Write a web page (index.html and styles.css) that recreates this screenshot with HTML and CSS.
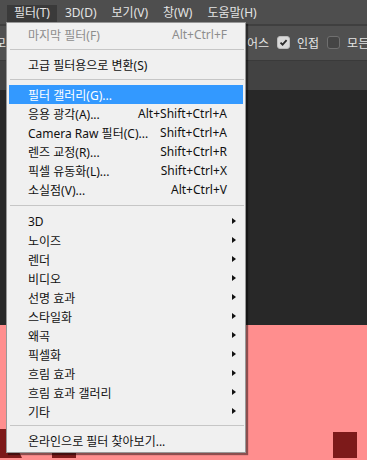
FILE: index.html
```html
<!DOCTYPE html>
<html lang="ko">
<head>
  <meta charset="UTF-8">
  <title>필터 메뉴</title>
  <link rel="stylesheet" href="styles.css">
</head>
<body>
  <div id="app">
    <div class="menubar">
      <span class="menubar-item open">필터(T)</span>
      <span class="menubar-item">3D(D)</span>
      <span class="menubar-item">보기(V)</span>
      <span class="menubar-item">창(W)</span>
      <span class="menubar-item">도움말(H)</span>
    </div>

    <div class="options">
      <span class="opt-mode">모드</span>
      <span class="opt-aa">앨리어스</span>
      <span class="check checked">
        <svg width="11" height="11" viewBox="0 0 11 11"><path d="M2.5 5.6 L4.6 7.7 L8.6 3.2" fill="none" stroke="#2b2b2b" stroke-width="1.8"/></svg>
      </span>
      <span class="opt-label">인접</span>
      <span class="check"></span>
      <span class="opt-label">모든 레이어 샘플링</span>
    </div>

    <div class="tabbar"></div>

    <div class="workspace"></div>

    <div class="artboard">
      <svg class="art" width="367" height="133" viewBox="0 0 367 133">
        <rect x="0" y="0" width="367" height="133" fill="#ff8e8e"/>
        <path d="M0 104 L8 104 L22 133 L0 133 Z" fill="#7d1a1a"/>
        <rect x="52" y="124" width="24" height="9" fill="#7d1a1a"/>
        <rect x="333" y="107" width="24" height="26" fill="#7d1a1a"/>
      </svg>
    </div>

    <div class="menu">
      <div class="item disabled"><span class="label">마지막 필터(F)</span><span class="shortcut">Alt+Ctrl+F</span><span class="sub"></span></div>
      <div class="sep"></div>
      <div class="item"><span class="label">고급 필터용으로 변환(S)</span><span class="sub"></span></div>
      <div class="sep"></div>
      <div class="item active"><span class="label">필터 갤러리(G)...</span><span class="sub"></span></div>
      <div class="item"><span class="label">응용 광각(A)...</span><span class="shortcut">Alt+Shift+Ctrl+A</span><span class="sub"></span></div>
      <div class="item"><span class="label">Camera Raw 필터(C)...</span><span class="shortcut">Shift+Ctrl+A</span><span class="sub"></span></div>
      <div class="item"><span class="label">렌즈 교정(R)...</span><span class="shortcut">Shift+Ctrl+R</span><span class="sub"></span></div>
      <div class="item"><span class="label">픽셀 유동화(L)...</span><span class="shortcut">Shift+Ctrl+X</span><span class="sub"></span></div>
      <div class="item"><span class="label">소실점(V)...</span><span class="shortcut">Alt+Ctrl+V</span><span class="sub"></span></div>
      <div class="sep wide"></div>
      <div class="item"><span class="label">3D</span><span class="sub arrow"></span></div>
      <div class="item"><span class="label">노이즈</span><span class="sub arrow"></span></div>
      <div class="item"><span class="label">렌더</span><span class="sub arrow"></span></div>
      <div class="item"><span class="label">비디오</span><span class="sub arrow"></span></div>
      <div class="item"><span class="label">선명 효과</span><span class="sub arrow"></span></div>
      <div class="item"><span class="label">스타일화</span><span class="sub arrow"></span></div>
      <div class="item"><span class="label">왜곡</span><span class="sub arrow"></span></div>
      <div class="item"><span class="label">픽셀화</span><span class="sub arrow"></span></div>
      <div class="item"><span class="label">흐림 효과</span><span class="sub arrow"></span></div>
      <div class="item"><span class="label">흐림 효과 갤러리</span><span class="sub arrow"></span></div>
      <div class="item"><span class="label">기타</span><span class="sub arrow"></span></div>
      <div class="sep narrow"></div>
      <div class="item"><span class="label">온라인으로 필터 찾아보기...</span><span class="sub"></span></div>
    </div>
  </div>
</body>
</html>
```

FILE: styles.css
```css
html, body {
  margin: 0;
  padding: 0;
}

body {
  background-color: #282828;
  font-family: "Noto Sans", "Noto Sans CJK KR", sans-serif;
  font-size: 12px;
  overflow: hidden;
}

#app {
  position: relative;
  width: 367px;
  height: 460px;
  display: flex;
  flex-direction: column;
  overflow: hidden;
}

/* top menu bar */
.menubar {
  height: 26px;
  background-color: #4e4e4e;
  border-bottom: 2px solid #3f3f3f;
  display: flex;
  align-items: flex-start;
  padding: 5px 0 0 7px;
  box-sizing: border-box;
  flex-shrink: 0;
}

.menubar-item {
  color: #e4e4e4;
  height: 17px;
  line-height: 16px;
  padding: 0 7px;
  margin-right: 1px;
}

.menubar-item.open {
  background-color: #3a3a3a;
}

/* options bar */
.options {
  height: 34px;
  background-color: #505050;
  display: flex;
  align-items: center;
  white-space: nowrap;
  color: #e4e4e4;
  padding-bottom: 1px;
  box-sizing: border-box;
  flex-shrink: 0;
}

.options > span {
  flex-shrink: 0;
}

.opt-mode {
  margin-left: -5px;
  width: 224px;
}

.opt-aa {
  width: 50px;
  text-align: right;
}

.check {
  width: 11px;
  height: 11px;
  margin-left: 8px;
  border: 1px solid #6f6f6f;
  border-radius: 3px;
  background-color: #454545;
  display: flex;
}

.check.checked {
  background-color: #d9d9d9;
  border-color: #bdbdbd;
}

.opt-label {
  margin-left: 7px;
}

.tabbar {
  height: 30px;
  background-color: #424242;
  border-top: 1px solid #3a3a3a;
  box-sizing: border-box;
  flex-shrink: 0;
}

.workspace {
  height: 235px;
  background-color: #282828;
  flex-shrink: 0;
}

.artboard {
  flex: 1;
  background-color: #ff8e8e;
}

.art {
  display: block;
}

/* dropdown */
.menu {
  position: absolute;
  left: 6px;
  top: 22px;
  width: 240px;
  box-sizing: border-box;
  background-color: #f0f0f0;
  border: 1px solid #989898;
  padding: 2px 1px;
  box-shadow: 2px 2px 1px rgba(0, 0, 0, 0.45);
}

.item {
  height: 19px;
  display: flex;
  align-items: center;
  padding-left: 19px;
  margin: 0 1px;
  color: #111;
  white-space: nowrap;
}

.item .label {
  flex: 1;
}

.item .shortcut {
  text-align: right;
}

.item .sub {
  width: 16px;
  height: 19px;
  flex-shrink: 0;
  position: relative;
}

.item .arrow::after {
  content: "";
  position: absolute;
  left: 5px;
  top: 6px;
  border-left: 4px solid #111;
  border-top: 3.5px solid transparent;
  border-bottom: 3.5px solid transparent;
}

.item.disabled {
  color: #8d8d8d;
}

.item.active {
  background-color: #3399ff;
  color: #fff;
}

.sep {
  height: 1px;
  background-color: #c6c6c6;
  margin: 5px 0 5px 2px;
}

.sep.wide {
  margin: 6px 0 6px 2px;
}

.sep.narrow {
  margin: 4px 0 5px 2px;
}
```
